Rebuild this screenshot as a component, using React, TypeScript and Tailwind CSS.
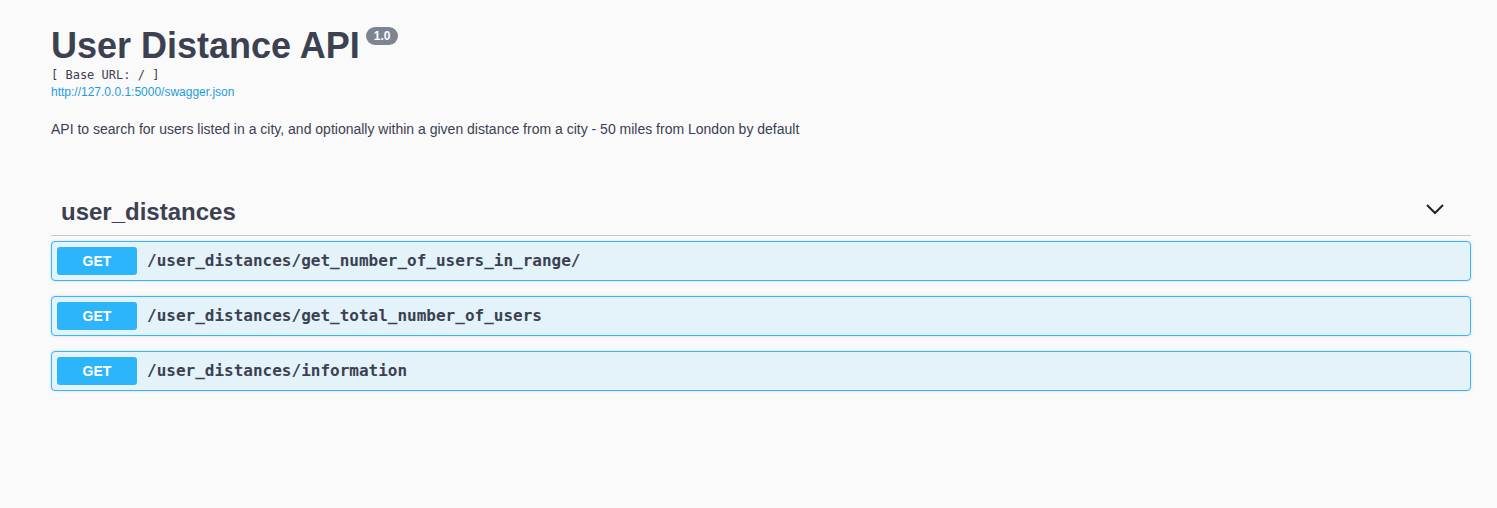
import React from 'react';

const ops = [
  '/user_distances/get_number_of_users_in_range/',
  '/user_distances/get_total_number_of_users',
  '/user_distances/information',
];

const sans = "font-['Liberation_Sans',Arial,sans-serif]";
const mono = "font-['DejaVu_Sans_Mono',monospace]";

const App = () => {
  return (
    <div className={`min-h-[508px] bg-[#fafafa] text-[#3b4151] ${sans}`}>
      <div className="pl-[51px] pr-[26px] pt-[26px]">
        {/* Info */}
        <div className="flex items-start">
          <h1 className="text-[36px] leading-[40px] font-bold text-[#3b4151]">User Distance API</h1>
          <span className="ml-[6px] mt-[1px] rounded-[9px] bg-[#7d8492] px-[8px] h-[18px] flex items-center text-[12px] font-bold text-white">
            1.0
          </span>
        </div>
        <div className={`${mono} text-[12px] leading-[14px] mt-[2px] text-[#3b4151]`}>[ Base URL: / ]</div>
        <a className="block text-[12px] leading-[14px] mt-[3px] text-[#1d9ce0]">http://127.0.0.1:5000/swagger.json</a>
        <p className="text-[14px] leading-[18px] mt-[21px]">
          API to search for users listed in a city, and optionally within a given distance from a city - 50 miles from London by default
        </p>

        {/* Tag */}
        <div className="mt-[45px] flex items-center justify-between border-b border-[#c6c6c6] h-[53px] pt-[6px] pl-[10px] pr-[26px]">
          <h3 className="text-[24px] font-bold">user_distances</h3>
          <svg width="20" height="20" viewBox="0 0 20 20" className="text-[#222] -mt-[6px]">
            <path d="M2 6 L10 14 L18 6" fill="none" stroke="currentColor" strokeWidth="2" />
          </svg>
        </div>

        <div className="flex flex-col gap-[15px] mt-[5px]">
          {ops.map((p) => (
            <div
              key={p}
              className="flex items-center h-[40px] rounded-[4px] border border-[#33b9f9] bg-[#e4f2fa] px-[5px] shadow-[0_0_3px_rgba(0,0,0,0.15)]"
            >
              <span className="w-[80px] h-[28px] rounded-[3px] bg-[#2cb5fb] text-white text-[14px] font-bold flex items-center justify-center">
                GET
              </span>
              <span className={`${mono} ml-[10px] text-[16px] font-bold text-[#3b4151]`}>{p}</span>
            </div>
          ))}
        </div>
      </div>
    </div>
  );
};

export default App;
